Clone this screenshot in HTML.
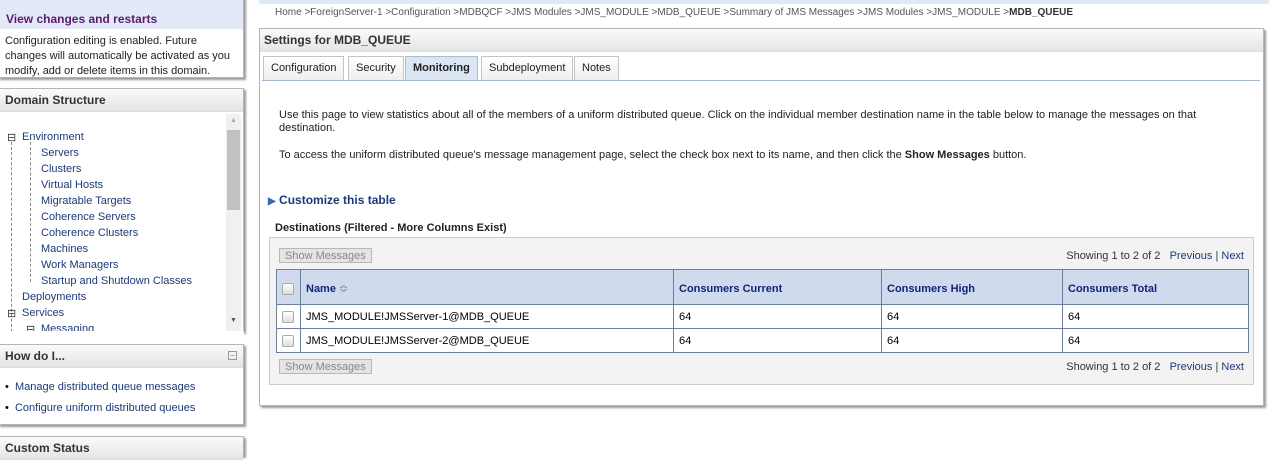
<!DOCTYPE html>
<html><head><style>
*{box-sizing:border-box;margin:0;padding:0}
body{width:1269px;height:445px;overflow:hidden;background:#fff;font-family:"Liberation Sans",Tahoma,sans-serif;font-size:11px;color:#000;position:relative}
.abs{position:absolute}
.panel{position:absolute;background:#fff;border:1px solid #b5b5b5;box-shadow:2px 2px 2px #999}
.ph{background:linear-gradient(#fbfbfb,#e4e4e4);font-weight:bold;font-size:12px;color:#333;padding:4px 4px;height:23px;border-bottom:1px solid #ddd}
a,.lnk{color:#1a3a78;text-decoration:none}
.tree div{position:absolute;white-space:nowrap;color:#1a3a78;font-size:11px}
.tab{position:absolute;top:56px;height:25px;border:1px solid #c4c4c4;border-bottom:none;background:linear-gradient(#fff,#eee);padding:5px 7px;font-size:11px;color:#222}
.btn{position:absolute;border:1px solid #b8b8b8;background:#e4e4e4;color:#888;font-size:11px;padding:1px 5px;height:15px;line-height:12px}
table{border-collapse:collapse;position:absolute;left:276px;top:269px;width:972px;table-layout:fixed}
td,th{border:1px solid #6d7f99;font-size:11px;text-align:left;padding:0 5px}
th{background:#cfdbec;color:#13237e;height:35px;font-size:11px;padding-top:3px}
td{height:24px;background:#fff}
.cb{display:inline-block;width:12px;height:12px;border:1px solid #aaa;border-radius:2px;background:linear-gradient(#fff,#ddd);vertical-align:middle}
.pg{position:absolute;right:25px;font-size:11px;color:#333}
.pg span{color:#1a3a78}
</style></head><body>
<!-- left -->
<div class="panel" style="left:-2px;top:-4px;width:246px;height:82px">
 <div style="background:#e3e9f6;height:32px;padding:15px 7px 0;font-weight:bold;font-size:12px;color:#5b1b70">View changes and restarts</div>
 <div style="padding:5px 6px;font-size:11px;line-height:15px;color:#222">Configuration editing is enabled. Future changes will automatically be activated as you modify, add or delete items in this domain.</div>
</div>
<div class="panel" style="left:-2px;top:88px;width:246px;height:244px">
 <div class="ph" style="padding-left:6px">Domain Structure</div>
 <div class="abs" style="left:227px;top:25px;width:15px;height:218px;background:#f0f0f0"></div>
 <div class="abs" style="left:228px;top:41px;width:13px;height:80px;background:#c1c1c1"></div>
 <div class="abs" style="left:231px;top:28px;color:#aaa;font-size:7px">▲</div>
 <div class="abs" style="left:231px;top:228px;color:#555;font-size:7px">▼</div>
</div>
<div class="tree">
 <div style="left:7px;top:131px;color:#333">⊟</div>
 <div class="abs" style="left:11px;top:142px;height:190px;border-left:1px dashed #888;position:absolute"></div>
 <div class="abs" style="left:30px;top:142px;height:140px;border-left:1px dashed #888;position:absolute"></div>
 <div style="left:22px;top:131px">Environment</div>
 <div style="left:41px;top:147px">Servers</div>
 <div style="left:41px;top:163px">Clusters</div>
 <div style="left:41px;top:179px">Virtual Hosts</div>
 <div style="left:41px;top:195px">Migratable Targets</div>
 <div style="left:41px;top:211px">Coherence Servers</div>
 <div style="left:41px;top:227px">Coherence Clusters</div>
 <div style="left:41px;top:243px">Machines</div>
 <div style="left:41px;top:259px">Work Managers</div>
 <div style="left:41px;top:275px">Startup and Shutdown Classes</div>
 <div style="left:22px;top:291px">Deployments</div>
 <div style="left:7px;top:307px;color:#333">⊟</div>
 <div style="left:22px;top:307px">Services</div>
 <div style="left:26px;top:323px;color:#333">⊟</div>
 <div style="left:41px;top:323px">Messaging</div>
</div>
<div class="abs" style="left:0;top:331px;width:244px;height:13px;background:#fff"></div>
<div class="panel" style="left:-2px;top:344px;width:246px;height:81px">
 <div class="ph" style="padding-left:6px">How do I...<span style="float:right;font-weight:normal;color:#777;border:1px solid #999;font-size:8px;width:9px;height:9px;line-height:7px;text-align:center;margin-top:2px;margin-right:2px">−</span></div>
 <div style="padding:9px 6px;line-height:21px;font-size:11px">• &nbsp;<span class="lnk">Manage distributed queue messages</span><br>• &nbsp;<span class="lnk">Configure uniform distributed queues</span></div>
</div>
<div class="panel" style="left:-2px;top:436px;width:246px;height:20px">
 <div class="ph" style="padding-left:6px">Custom Status</div>
</div>
<!-- right -->
<div class="abs" style="left:259px;top:0;width:1010px;height:4px;background:#dfe8f5"></div>
<div class="abs" style="left:275px;top:7px;font-size:10px;color:#555">Home &gt;ForeignServer-1 &gt;Configuration &gt;MDBQCF &gt;JMS Modules &gt;JMS_MODULE &gt;MDB_QUEUE &gt;Summary of JMS Messages &gt;JMS Modules &gt;JMS_MODULE &gt;<b style="color:#333">MDB_QUEUE</b></div>
<div class="panel" style="left:259px;top:28px;width:1005px;height:378px">
 <div class="ph" style="height:23px;padding:4px 4px">Settings for MDB_QUEUE</div>
</div>
<div class="tab" style="left:263px">Configuration</div>
<div class="tab" style="left:348px">Security</div>
<div class="tab" style="left:405px;background:#dbe6f3;font-weight:bold;border-color:#a9bcd6">Monitoring</div>
<div class="tab" style="left:481px">Subdeployment</div>
<div class="tab" style="left:574px">Notes</div>
<div class="abs" style="left:262px;top:80px;width:998px;height:1px;background:#a7b8cc"></div>
<div class="abs" style="left:279px;top:109px;width:960px;line-height:13px;font-size:11px;color:#222">Use this page to view statistics about all of the members of a uniform distributed queue. Click on the individual member destination name in the table below to manage the messages on that destination.</div>
<div class="abs" style="left:279px;top:149px;font-size:11px;color:#222">To access the uniform distributed queue's message management page, select the check box next to its name, and then click the <b>Show Messages</b> button.</div>
<div class="abs" style="left:268px;top:193px;font-weight:bold;font-size:12px;color:#1a3a78"><span style="color:#3a67b8;font-size:10px">▶</span> Customize this table</div>
<div class="abs" style="left:275px;top:222px;font-weight:bold;font-size:11px;color:#222">Destinations (Filtered - More Columns Exist)</div>
<div class="abs" style="left:269px;top:237px;width:985px;height:148px;background:#f3f3f3;border:1px solid #ccc"></div>
<div class="btn" style="left:279px;top:248px">Show Messages</div>
<div class="pg" style="top:250px">Showing 1 to 2 of 2 &nbsp; <span>Previous</span> | <span>Next</span></div>
<table>
<colgroup><col style="width:24px"><col style="width:373px"><col style="width:208px"><col style="width:181px"><col style="width:186px"></colgroup>
<tr><th><span class="cb"></span></th><th>Name <span style="color:#888;font-weight:normal">≎</span></th><th>Consumers Current</th><th>Consumers High</th><th>Consumers Total</th></tr>
<tr><td><span class="cb"></span></td><td>JMS_MODULE!JMSServer-1@MDB_QUEUE</td><td>64</td><td>64</td><td>64</td></tr>
<tr><td><span class="cb"></span></td><td>JMS_MODULE!JMSServer-2@MDB_QUEUE</td><td>64</td><td>64</td><td>64</td></tr>
</table>
<div class="btn" style="left:279px;top:359px">Show Messages</div>
<div class="pg" style="top:361px">Showing 1 to 2 of 2 &nbsp; <span>Previous</span> | <span>Next</span></div>
</body></html>
